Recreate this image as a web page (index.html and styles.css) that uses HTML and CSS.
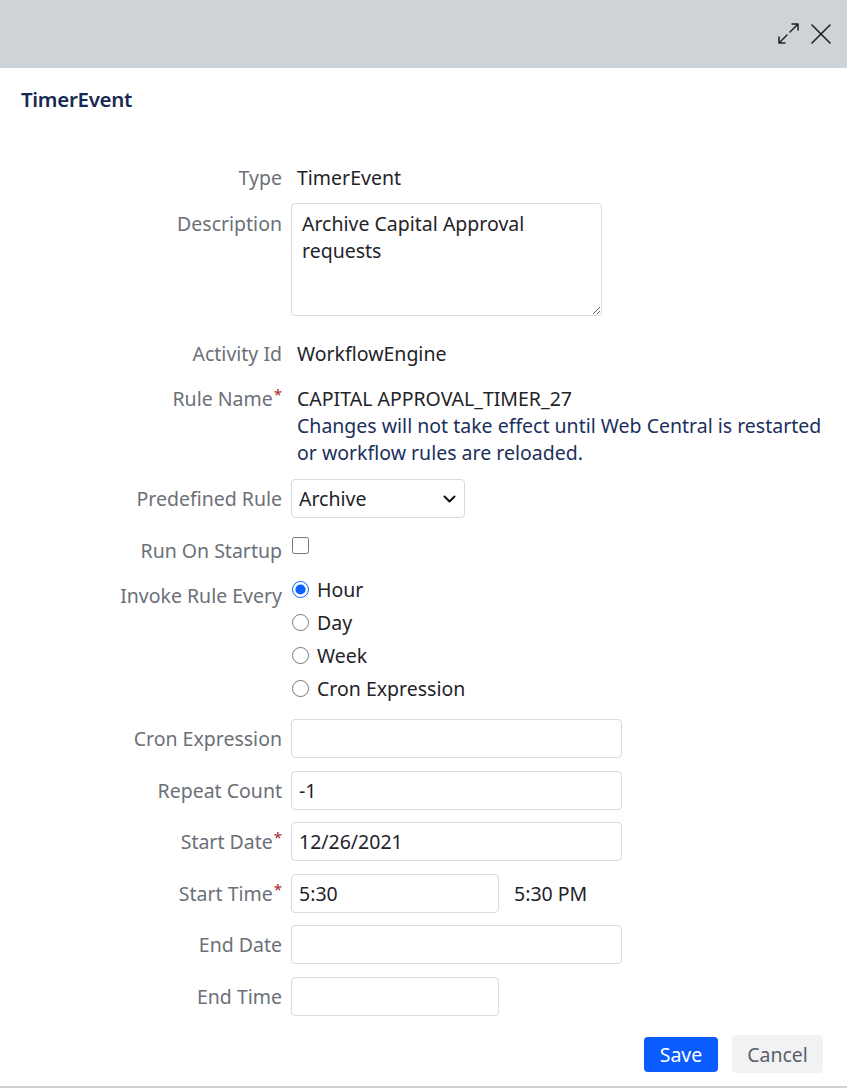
FILE: index.html
```html
<!DOCTYPE html>
<html lang="en">
<head>
    <meta charset="UTF-8">
    <title>TimerEvent</title>
    <link rel="stylesheet" href="styles.css">
</head>
<body>
<div id="head">
    <span class="tool" title="Maximize">
        <svg width="24" height="24" viewBox="0 0 24 24" fill="none" stroke="#222" stroke-width="1.5" stroke-linecap="round" stroke-linejoin="round">
            <path d="M13 10 L21 2 M15 2 H21 V8"/>
            <path d="M10 13 L2 21 M2 15 V21 H8"/>
        </svg>
    </span>
    <span class="tool" title="Close">
        <svg width="22" height="22" viewBox="0 0 22 22" fill="none" stroke="#222" stroke-width="1.6" stroke-linecap="round">
            <path d="M2 2 L20 20 M20 2 L2 20"/>
        </svg>
    </span>
</div>
<div id="title">TimerEvent</div>
<div id="form">
    <div class="row r-type">
        <span class="lbl">Type</span><span class="val">TimerEvent</span>
    </div>
    <div class="row r-desc">
        <span class="lbl top">Description</span>
        <textarea class="area">Archive Capital Approval requests</textarea>
    </div>
    <div class="row r-act">
        <span class="lbl">Activity Id</span><span class="val">WorkflowEngine</span>
    </div>
    <div class="row r-rule">
        <span class="lbl">Rule Name<i class="req">*</i></span>
        <div class="val">
            CAPITAL APPROVAL_TIMER_27<br>
            <span class="note">Changes will not take effect until Web Central is restarted or workflow rules are reloaded.</span>
        </div>
    </div>
    <div class="row mid r-pre">
        <span class="lbl">Predefined Rule</span>
        <span class="selbox">
            <select class="sel">
                <option>Archive</option>
                <option>Notify</option>
            </select>
            <svg class="chev" width="13" height="8" viewBox="0 0 13 8" fill="none" stroke="#111" stroke-width="2" stroke-linecap="round" stroke-linejoin="round">
                <path d="M1.5 1.5 L6.5 6.5 L11.5 1.5"/>
            </svg>
        </span>
    </div>
    <div class="row r-run">
        <span class="lbl">Run On Startup</span>
        <input type="checkbox" class="chk">
    </div>
    <div class="row r-inv">
        <span class="lbl inv">Invoke Rule Every</span>
        <div class="radios">
            <label><input type="radio" name="every" checked>Hour</label>
            <label><input type="radio" name="every">Day</label>
            <label><input type="radio" name="every">Week</label>
            <label><input type="radio" name="every">Cron Expression</label>
        </div>
    </div>
    <div class="row mid field">
        <span class="lbl">Cron Expression</span><input class="txt wide" value="">
    </div>
    <div class="row mid field">
        <span class="lbl">Repeat Count</span><input class="txt wide" value="-1">
    </div>
    <div class="row mid field">
        <span class="lbl">Start Date<i class="req">*</i></span><input class="txt wide" value="12/26/2021">
    </div>
    <div class="row mid field">
        <span class="lbl">Start Time<i class="req">*</i></span><input class="txt short" value="5:30"><span class="pm">5:30 PM</span>
    </div>
    <div class="row mid field">
        <span class="lbl">End Date</span><input class="txt wide" value="">
    </div>
    <div class="row mid field">
        <span class="lbl">End Time</span><input class="txt short" value="">
    </div>
</div>
<div id="foot">
    <button class="btn save">Save</button>
    <button class="btn cancel">Cancel</button>
</div>
</body>
</html>
```
FILE: styles.css
```css
*{
    margin: 0;
    padding: 0;
    box-sizing: border-box;
}
html,body {
    width: 100%;
    height: 100%;
    background-color: #fff;
}
body {
    font-family: "Noto Sans", "Open Sans", sans-serif;
    font-size: 19.5px;
    line-height: 27px;
    color: #1f2328;
    border-bottom: 2px solid #cfd3d7;
}
#head {
    height: 68px;
    background-color: #ced3d7;
    display: flex;
    justify-content: flex-end;
    align-items: center;
    padding-right: 15px;
    gap: 9px;
}
.tool {
    display: flex;
    cursor: pointer;
}
#title {
    padding: 18px 21px 0;
    font-size: 20.5px;
    font-weight: 600;
    color: #172a52;
    letter-spacing: -0.3px;
}
#form {
    padding-top: 51px;
    padding-right: 12px;
}
.row {
    display: flex;
    align-items: flex-start;
    margin-bottom: 13px;
}
.row.mid {
    align-items: center;
}
.row.field {
    margin-bottom: 12.5px;
}
.lbl {
    width: 282px;
    flex: none;
    text-align: right;
    color: #6b7078;
    margin-right: 9px;
}
.lbl.top {
    padding-top: 7px;
}
.lbl.inv {
    padding-top: 9px;
}
.req {
    font-style: normal;
    color: #a3262a;
    font-size: 15px;
    line-height: 0;
    vertical-align: 6px;
    margin-left: 1px;
}
.val {
    padding-left: 6px;
    color: #1f2328;
}
.note {
    color: #1b2f5c;
}
.r-type {
    margin-bottom: 12px;
}
.r-desc {
    margin-bottom: 24px;
}
.r-act {
    margin-bottom: 18px;
}
.r-pre {
    margin-bottom: 19px;
}
.r-run {
    margin-bottom: 9px;
}
.r-inv {
    margin-bottom: 14px;
}
.area {
    width: 311px;
    height: 113px;
    border: 1px solid #d8dadd;
    border-radius: 4px;
    padding: 6px 10px;
    font: inherit;
    color: #1f2328;
}
.selbox {
    position: relative;
    display: flex;
}
.sel {
    appearance: none;
    width: 174px;
    height: 39px;
    border: 1px solid #d8dadd;
    border-radius: 4px;
    background-color: #fff;
    padding: 0 30px 0 7px;
    font: inherit;
    color: #1f2328;
}
.chev {
    position: absolute;
    right: 9px;
    top: 16px;
    pointer-events: none;
}
.chk {
    width: 17px;
    height: 17px;
    margin: 0 0 0 1px;
    accent-color: #0a62ff;
}
.radios label {
    display: flex;
    align-items: center;
    height: 33px;
}
.radios input {
    width: 17px;
    height: 17px;
    margin: 0 8px 0 1px;
    accent-color: #0a62ff;
}
.txt {
    height: 39px;
    border: 1px solid #d8dadd;
    border-radius: 4px;
    padding: 0 7px;
    font: inherit;
    color: #1f2328;
}
.wide {
    width: 331px;
}
.short {
    width: 208px;
}
.pm {
    margin-left: 15px;
}
#foot {
    display: flex;
    justify-content: flex-end;
    align-items: center;
    gap: 14px;
    padding: 7px 24px 0 0;
}
.btn {
    font: inherit;
    font-size: 19.5px;
    border: 0;
    border-radius: 4px;
    cursor: pointer;
}
.save {
    width: 74px;
    height: 35px;
    background-color: #0b5cfe;
    color: #fff;
}
.cancel {
    width: 91px;
    height: 38px;
    background-color: #f1f2f4;
    color: #5a5f68;
}
```
